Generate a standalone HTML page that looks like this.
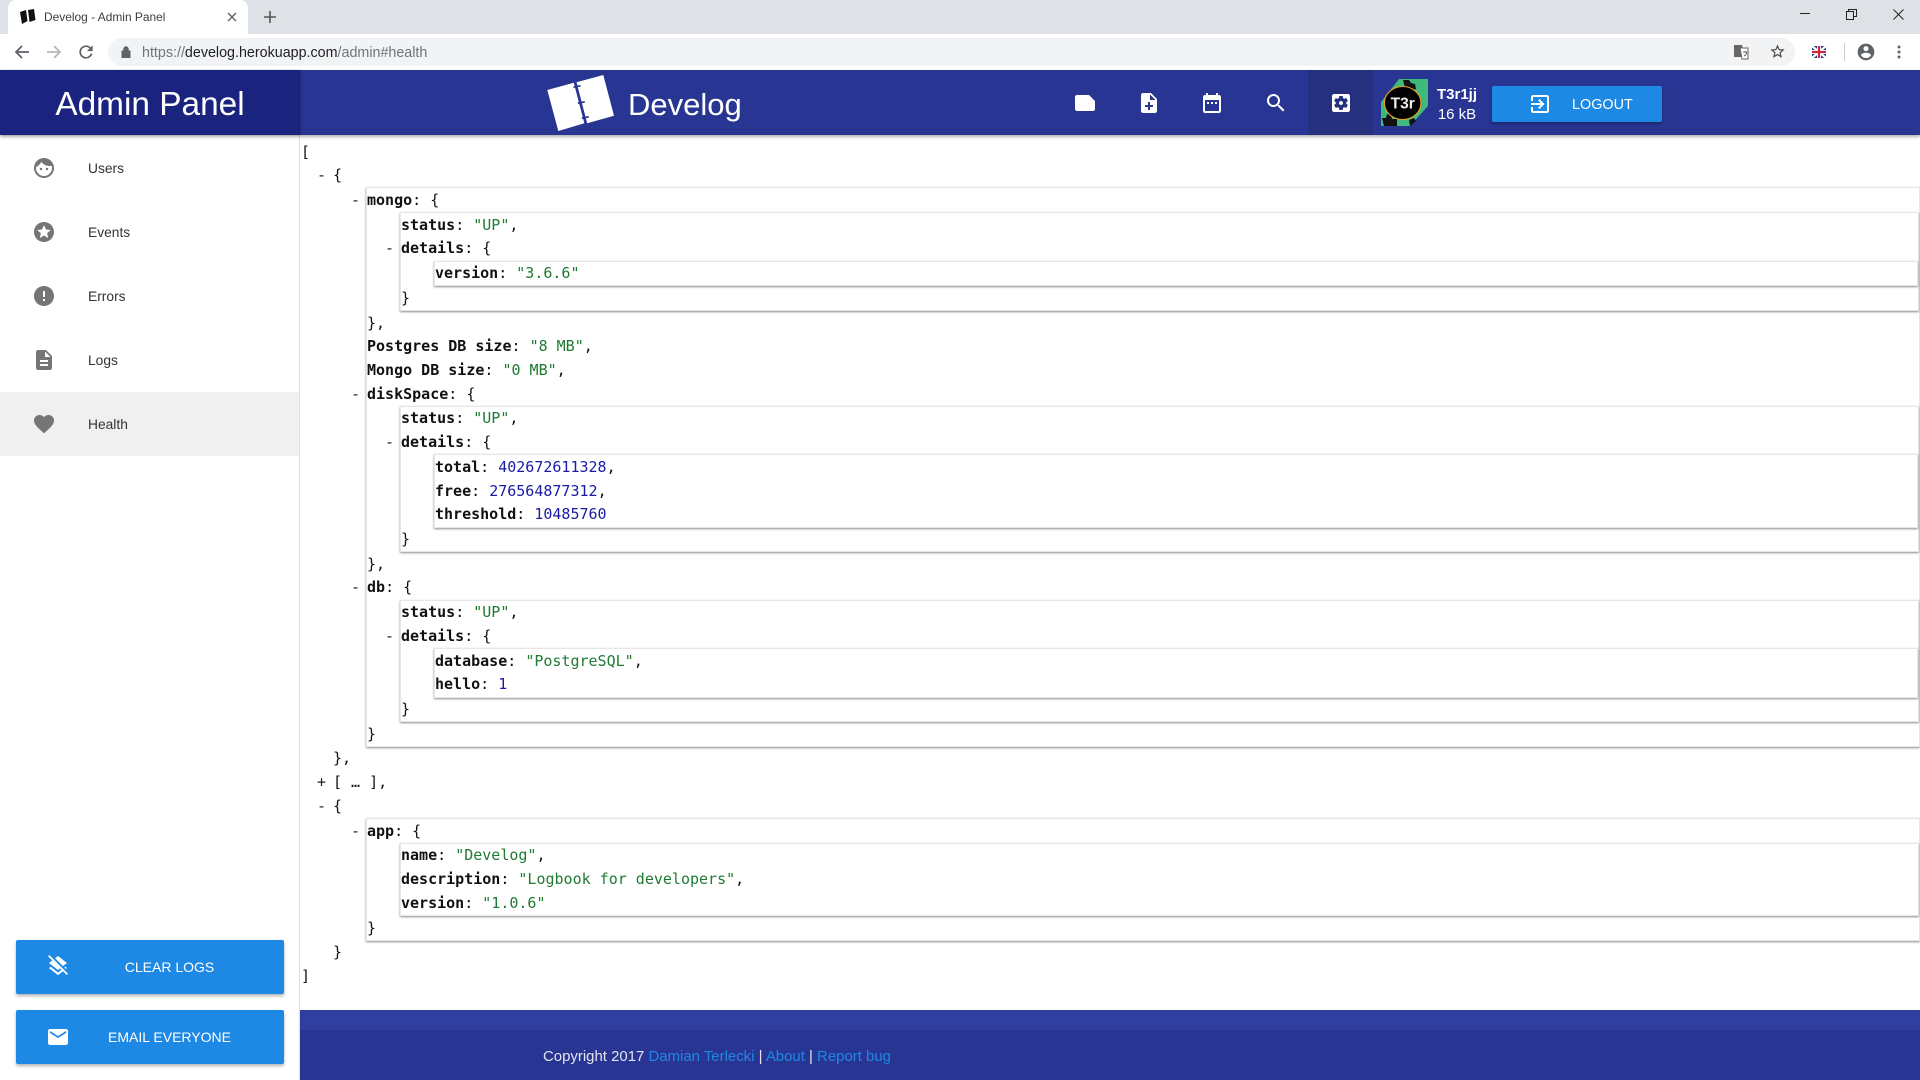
<!DOCTYPE html>
<html><head><meta charset="utf-8"><title>Develog - Admin Panel</title>
<style>
*{box-sizing:border-box}
html,body{margin:0;padding:0;width:1920px;height:1080px;overflow:hidden;background:#fff;font-family:"Liberation Sans",sans-serif}
.a{position:absolute}
svg{display:block}
.tabs{left:0;top:0;width:1920px;height:34px;background:#dee1e6}
.tab{left:8px;top:0;width:240px;height:34px;background:#fff;border-radius:8px 8px 0 0}
.tb{left:0;top:34px;width:1920px;height:36px;background:#fff}
.omni{left:108px;top:38px;width:1687px;height:28px;background:#f1f3f4;border-radius:14px}
.hdr{left:0;top:70px;width:1920px;height:65px;background:#283593;box-shadow:0 2px 3px rgba(0,0,0,.3);z-index:3}
.side{left:0;top:135px;width:300px;height:945px;background:#fff;border-right:1px solid #e0e0e0;z-index:2}
.it{position:absolute;left:0;width:299px;height:64px}
.it svg{position:absolute;left:32px;top:20px}
.it span{position:absolute;left:88px;top:1px;line-height:64px;font-size:13.8px;color:#333}
.btn{position:absolute;background:#1e88e5;border-radius:2px;box-shadow:0 2px 3px rgba(0,0,0,.3);color:#fff}
.btn span{position:absolute;text-align:center;left:0;width:100%}
.json{position:absolute;left:301px;top:140px;width:1619px;height:869px;overflow:hidden;font:15px/23.72px "DejaVu Sans Mono","Liberation Mono",monospace;color:#111;z-index:1}
.l{height:23.72px;position:relative;white-space:pre;top:.5px}
.n{margin-left:32px}
.b{margin-left:33px;border:1px solid #e6e6e6;box-shadow:0 1px 2px rgba(0,0,0,.45);position:relative;background:#fff}
.d{position:absolute;left:-16px;color:#222}
b{font-weight:bold;color:#111}
i{font-style:normal;color:#1f7a32}
u{text-decoration:none;color:#1a1aa6}
.ft{left:300px;top:1010px;width:1620px;height:70px;background:#283593;z-index:2}
.ft div{position:absolute;left:0;top:0;width:100%;height:20px;background:#303f9f}
.ft p{position:absolute;left:243px;top:38px;margin:0;font-size:14.95px;line-height:18px;color:#e3e5f0;white-space:nowrap}
.ft a{color:#1e88e5;text-decoration:none}
</style></head><body>
<div class="a tabs"></div>
<div class="a tab"></div>
<svg class="a" style="left:19px;top:9px" width="17" height="16" viewBox="0 0 17 16"><path d="M1 3l6-2 1.5 11-5.5 3zM9 1l6-1 1.5 11-6 2z" fill="#111"/></svg>
<div class="a" style="left:44px;top:9px;font-size:11.95px;line-height:16px;color:#3c4043">Develog - Admin Panel</div>
<svg class="a" style="left:227px;top:12px" width="10" height="10" viewBox="0 0 10 10"><path d="M1 1l8 8M9 1L1 9" stroke="#5f6368" stroke-width="1.4"/></svg>
<svg class="a" style="left:264px;top:11px" width="12" height="12" viewBox="0 0 12 12"><path d="M6 0v12M0 6h12" stroke="#555" stroke-width="1.6"/></svg>
<svg class="a" style="left:1800px;top:13px" width="11" height="2"><rect width="10" height="1" fill="#222"/></svg>
<svg class="a" style="left:1846px;top:9px" width="11" height="11" viewBox="0 0 11 11"><path d="M.5 2.5h7v8h-7zM2.5 2.5v-2h8v7h-3" fill="none" stroke="#222"/></svg>
<svg class="a" style="left:1893px;top:9px" width="11" height="11" viewBox="0 0 11 11"><path d="M.5.5l10 10M10.500.5l-10 10" stroke="#222"/></svg>
<div class="a tb"></div>
<svg class="a" style="left:14px;top:44px" width="16" height="16" viewBox="0 0 16 16"><path d="M15 8H2M8 2L2 8l6 6" fill="none" stroke="#5f6368" stroke-width="1.8"/></svg>
<svg class="a" style="left:46px;top:44px" width="16" height="16" viewBox="0 0 16 16"><path d="M1 8h13M8 2l6 6-6 6" fill="none" stroke="#b4b7bb" stroke-width="1.8"/></svg>
<svg class="a" style="left:76px;top:42px" width="20" height="20" viewBox="0 0 24 24"><path d="M17.65 6.35A7.96 7.96 0 0 0 12 4a8 8 0 1 0 7.73 10h-2.08A6 6 0 1 1 12 6c1.66 0 3.14.69 4.22 1.78L13 11h7V4l-2.35 2.35z" fill="#5f6368"/></svg>
<div class="a omni"></div>
<svg class="a" style="left:121px;top:46px" width="10" height="12" viewBox="0 0 10 12"><path d="M1 5h8v7H1zM2.8 5V3a2.2 2.2 0 0 1 4.4 0v2" fill="#5f6368" stroke="#5f6368"/></svg>
<div class="a" style="left:142px;top:43.500px;font-size:14.300px;line-height:18px;color:#70757a;white-space:nowrap">https://<span style="color:#202124">develog.herokuapp.com</span>/admin#health</div>
<svg class="a" style="left:1733px;top:45px" width="16" height="15" viewBox="0 0 16 15"><path d="M1 0h8l3 12H1z" fill="#666"/><path d="M7 3h8v11H9z" fill="#fff" stroke="#666"/><path d="M10 7h4M12 6v1M11 11c2-1 2.500-2 3-4" stroke="#666" fill="none"/></svg>
<svg class="a" style="left:1769px;top:43px" width="17" height="17" viewBox="0 0 24 24"><path d="M22 9.24l-7.19-.62L12 2 9.19 8.63 2 9.24l5.46 4.73L5.82 21 12 17.27 18.18 21l-1.63-7.03L22 9.24zM12 15.4l-3.76 2.27 1-4.28-3.32-2.88 4.38-.38L12 6.1l1.71 4.04 4.38.38-3.32 2.88 1 4.28L12 15.4z" fill="#444"/></svg>
<svg class="a" style="left:1812px;top:46px" width="14" height="12" viewBox="0 0 14 12"><rect width="14" height="12" fill="#2a3f8f" rx="1"/><path d="M0 0l14 12M14 0L0 12" stroke="#fff" stroke-width="2.2"/><path d="M7 0v12M0 6h14" stroke="#fff" stroke-width="4"/><path d="M7 0v12M0 6h14" stroke="#c8283c" stroke-width="2.2"/></svg>
<div class="a" style="left:1844px;top:43px;width:1px;height:18px;background:#ccc"></div>
<svg class="a" style="left:1856px;top:42px" width="20" height="20" viewBox="0 0 24 24"><path d="M12 2C6.48 2 2 6.48 2 12s4.48 10 10 10 10-4.48 10-10S17.52 2 12 2zm0 3c1.66 0 3 1.34 3 3s-1.34 3-3 3-3-1.34-3-3 1.34-3 3-3zm0 14.2a7.2 7.2 0 0 1-6-3.22c.03-1.99 4-3.08 6-3.08 1.99 0 5.97 1.09 6 3.08a7.2 7.2 0 0 1-6 3.22z" fill="#5f6368"/></svg>
<svg class="a" style="left:1897px;top:45px" width="4" height="14" viewBox="0 0 4 14"><circle cx="2" cy="2" r="1.5" fill="#5f6368"/><circle cx="2" cy="7" r="1.5" fill="#5f6368"/><circle cx="2" cy="12" r="1.5" fill="#5f6368"/></svg>

<div class="a hdr">
<div class="a" style="left:0;top:0;width:300px;height:65px;background:#1a237e;box-shadow:1px 0 2px rgba(0,0,0,.2)"></div>
<div class="a" style="left:0;top:2px;width:300px;text-align:center;line-height:66px;font-size:33.400px;color:#fff">Admin Panel</div>
<svg class="a" style="left:540px;top:0" width="84" height="65" viewBox="540 70 84 65"><path d="M547.300 90l26.500-7.200 10.500 40.500L558.300 131z" fill="#fff"/><path d="M576.500 82.200l26.800-7.200 10.700 40.700-26.800 7.600z" fill="#fff"/><path d="M573.500 87.300l3.500-.9 3.500-.6M577.800 103.200l7-1.400M581.800 118.200l7-1.400" stroke="#283593" stroke-width="1.600"/></svg>
<div class="a" style="left:628px;top:0;line-height:70px;font-size:31px;color:#fff">Develog</div>
<div class="a" style="left:1308px;top:0;width:65px;height:65px;background:#25307f"></div>
<svg class="a" style="left:1073px;top:21px" width="24" height="24" viewBox="0 0 24 24"><path d="M22 10l-6-6H4c-1.1 0-2 .9-2 2v12.010c0 1.100.9 1.990 2 1.990l16-.01c1.100 0 2-.89 2-1.990v-8z" fill="#fff"/></svg>
<svg class="a" style="left:1137px;top:21px" width="24" height="24" viewBox="0 0 24 24"><path d="M14 2H6c-1.100 0-1.990.9-1.990 2L4 20c0 1.100.89 2 1.990 2H18c1.100 0 2-.9 2-2V8l-6-6zm2 14h-3v3h-2v-3H8v-2h3v-3h2v3h3v2zm-3-7V3.500L18.500 9H13z" fill="#fff"/></svg>
<svg class="a" style="left:1200px;top:21px" width="24" height="24" viewBox="0 0 24 24"><path d="M9 11H7v2h2v-2zm4 0h-2v2h2v-2zm4 0h-2v2h2v-2zm2-7h-1V2h-2v2H8V2H6v2H5c-1.110 0-1.990.9-1.990 2L3 20c0 1.100.89 2 2 2h14c1.100 0 2-.9 2-2V6c0-1.100-.9-2-2-2zm0 16H5V9h14v11z" fill="#fff"/></svg>
<svg class="a" style="left:1264px;top:21px" width="24" height="24" viewBox="0 0 24 24"><path d="M15.500 14h-.79l-.28-.27C15.410 12.590 16 11.110 16 9.500 16 5.910 13.090 3 9.500 3S3 5.910 3 9.500 5.910 16 9.500 16c1.610 0 3.090-.59 4.230-1.570l.27.28v.79l5 4.990L20.490 19l-4.990-5zm-6 0C7.010 14 5 11.990 5 9.500S7.010 5 9.500 5 14 7.010 14 9.500 11.990 14 9.500 14z" fill="#fff"/></svg>
<svg class="a" style="left:1329px;top:21px" width="24" height="24" viewBox="0 0 24 24"><path d="M12 10c-1.100 0-2 .9-2 2s.9 2 2 2 2-.9 2-2-.9-2-2-2zm7-7H5c-1.110 0-2 .9-2 2v14c0 1.100.89 2 2 2h14c1.110 0 2-.9 2-2V5c0-1.100-.89-2-2-2zm-1.750 9c0 .23-.02.46-.05.68l1.480 1.160c.13.11.17.3.08.45l-1.400 2.420c-.09.15-.27.21-.43.15l-1.740-.7c-.36.28-.76.51-1.180.69l-.26 1.850c-.03.17-.18.3-.35.3h-2.800c-.17 0-.32-.13-.35-.29l-.26-1.850c-.43-.18-.82-.41-1.180-.69l-1.740.7c-.16.06-.34 0-.43-.15l-1.400-2.420c-.09-.15-.05-.34.08-.45l1.480-1.160c-.03-.23-.05-.46-.05-.69 0-.23.02-.46.05-.68l-1.480-1.160c-.13-.11-.17-.3-.08-.45l1.400-2.420c.09-.15.27-.21.43-.15l1.740.7c.36-.28.76-.51 1.180-.69l.26-1.850c.03-.17.18-.3.35-.3h2.800c.17 0 .32.13.35.29l.26 1.850c.43.18.82.41 1.180.69l1.740-.7c.16-.06.34 0 .43.15l1.400 2.420c.09.15.05.34-.08.45l-1.480 1.160c.03.23.05.46.05.69z" fill="#fff"/></svg>
<svg class="a" style="left:1379px;top:8px" width="50" height="50" viewBox="0 0 50 50"><path d="M20 1L49 1 49 28 31 48 2 48 2 24z" fill="#3dba7c"/><path d="M24 2h6l2 3 4 1 1 5-6 2-5-3zM3 40h4l1-4 4 1 1 4h5v7H5zM30 42l5-2 2 3-6 5z" fill="#111"/><ellipse cx="23.700" cy="25" rx="18.300" ry="16.500" fill="#000" stroke="#e8a020" stroke-width="1.100"/><text x="23.700" y="30.500" text-anchor="middle" font-family="Liberation Sans,sans-serif" font-size="15.500" font-weight="bold" fill="#eee">T3r</text></svg>
<div class="a" style="left:1417px;top:14.500px;width:80px;text-align:center;font-size:15px;line-height:20px;font-weight:bold;color:#fff">T3r1jj</div>
<div class="a" style="left:1417px;top:34.500px;width:80px;text-align:center;font-size:15px;line-height:20px;color:#fff">16 kB</div>
<div class="btn" style="left:1492px;top:16px;width:170px;height:36px">
<svg class="a" style="left:36px;top:6px" width="24" height="24" viewBox="0 0 24 24"><path d="M10.090 15.590L11.500 17l5-5-5-5-1.410 1.410L12.670 11H3v2h9.670l-2.580 2.590zM19 3H5c-1.110 0-2 .9-2 2v4h2V5h14v14H5v-4H3v4c0 1.100.89 2 2 2h14c1.100 0 2-.9 2-2V5c0-1.100-.9-2-2-2z" fill="#fff"/></svg>
<span style="left:80px;width:60px;top:1px;line-height:37px;font-size:14.400px;text-align:center">LOGOUT</span></div>
</div>

<div class="a side">
<div class="it" style="top:1px"><svg width="24" height="24" viewBox="0 0 24 24"><path d="M9 11.750c-.69 0-1.250.56-1.250 1.250s.56 1.250 1.250 1.250 1.250-.56 1.250-1.250-.56-1.250-1.250-1.250zm6 0c-.69 0-1.250.56-1.250 1.250s.56 1.250 1.250 1.250 1.250-.56 1.250-1.250-.56-1.250-1.250-1.250zM12 2C6.480 2 2 6.480 2 12s4.480 10 10 10 10-4.480 10-10S17.520 2 12 2zm0 18c-4.410 0-8-3.590-8-8 0-.29.02-.58.05-.86 2.360-1.050 4.230-2.980 5.210-5.370C11.070 8.330 14.050 10 17.420 10c.78 0 1.530-.09 2.250-.26.21.71.33 1.470.33 2.260 0 4.410-3.590 8-8 8z" fill="#757575"/></svg><span>Users</span></div>
<div class="it" style="top:65px"><svg width="24" height="24" viewBox="0 0 24 24"><path d="M11.990 2C6.470 2 2 6.480 2 12s4.470 10 9.990 10C17.520 22 22 17.520 22 12S17.520 2 11.990 2zm4.240 16L12 15.450 7.770 18l1.120-4.810-3.730-3.230 4.920-.42L12 5l1.920 4.530 4.920.42-3.730 3.230L16.230 18z" fill="#757575"/></svg><span>Events</span></div>
<div class="it" style="top:129px"><svg width="24" height="24" viewBox="0 0 24 24"><path d="M12 2C6.480 2 2 6.480 2 12s4.480 10 10 10 10-4.480 10-10S17.520 2 12 2zm1 15h-2v-2h2v2zm0-4h-2V7h2v6z" fill="#757575"/></svg><span>Errors</span></div>
<div class="it" style="top:193px"><svg width="24" height="24" viewBox="0 0 24 24"><path d="M14 2H6c-1.100 0-1.990.9-1.990 2L4 20c0 1.100.89 2 1.990 2H18c1.100 0 2-.9 2-2V8l-6-6zm2 16H8v-2h8v2zm0-4H8v-2h8v2zm-3-5V3.500L18.500 9H13z" fill="#757575"/></svg><span>Logs</span></div>
<div class="it" style="top:257px;background:#f0f0f0"><svg width="24" height="24" viewBox="0 0 24 24"><path d="M12 21.350l-1.450-1.320C5.400 15.360 2 12.280 2 8.500 2 5.420 4.420 3 7.500 3c1.740 0 3.410.81 4.500 2.090C13.090 3.810 14.760 3 16.500 3 19.580 3 22 5.420 22 8.500c0 3.780-3.400 6.860-8.550 11.540L12 21.350z" fill="#757575"/></svg><span>Health</span></div>
<div class="btn" style="left:16px;top:805px;width:268px;height:54px">
<svg class="a" style="left:30px;top:14px" width="24" height="24" viewBox="0 0 24 24"><path d="M19.810 14.990l1.190-.92-1.430-1.430-1.190.92 1.430 1.430zm-.45-4.720L21 9l-9-7-2.910 2.270 7.870 7.880 2.400-1.880zM3.270 1L2 2.270l4.220 4.220L3 9l1.630 1.270L12 16l2.100-1.630 1.430 1.430L12 18.540l-7.370-5.730L3 14.070l9 7 4.950-3.850L20.730 21 22 19.730 3.270 1z" fill="#fff"/></svg>
<span style="left:57px;width:193px;top:0;line-height:54px;font-size:14px">CLEAR LOGS</span></div>
<div class="btn" style="left:16px;top:875px;width:268px;height:54px">
<svg class="a" style="left:30px;top:15px" width="24" height="24" viewBox="0 0 24 24"><path d="M20 4H4c-1.100 0-1.990.9-1.990 2L2 18c0 1.100.9 2 2 2h16c1.100 0 2-.9 2-2V6c0-1.100-.9-2-2-2zm0 4l-8 5-8-5V6l8 5 8-5v2z" fill="#fff"/></svg>
<span style="left:57px;width:193px;top:0;line-height:54px;font-size:14px">EMAIL EVERYONE</span></div>
</div>

<div class="json">
<div class="l">[</div>
<div class="n">
<div class="l"><span class="d">-</span>{</div>
<div class="b">
<div class="l"><span class="d">-</span><b>mongo</b>: {</div>
<div class="b">
<div class="l"><b>status</b>: <i>"UP"</i>,</div>
<div class="l"><span class="d">-</span><b>details</b>: {</div>
<div class="b"><div class="l"><b>version</b>: <i>"3.6.6"</i></div></div>
<div class="l">}</div>
</div>
<div class="l">},</div>
<div class="l"><b>Postgres DB size</b>: <i>"8 MB"</i>,</div>
<div class="l"><b>Mongo DB size</b>: <i>"0 MB"</i>,</div>
<div class="l"><span class="d">-</span><b>diskSpace</b>: {</div>
<div class="b">
<div class="l"><b>status</b>: <i>"UP"</i>,</div>
<div class="l"><span class="d">-</span><b>details</b>: {</div>
<div class="b">
<div class="l"><b>total</b>: <u>402672611328</u>,</div>
<div class="l"><b>free</b>: <u>276564877312</u>,</div>
<div class="l"><b>threshold</b>: <u>10485760</u></div>
</div>
<div class="l">}</div>
</div>
<div class="l">},</div>
<div class="l"><span class="d">-</span><b>db</b>: {</div>
<div class="b">
<div class="l"><b>status</b>: <i>"UP"</i>,</div>
<div class="l"><span class="d">-</span><b>details</b>: {</div>
<div class="b">
<div class="l"><b>database</b>: <i>"PostgreSQL"</i>,</div>
<div class="l"><b>hello</b>: <u>1</u></div>
</div>
<div class="l">}</div>
</div>
<div class="l">}</div>
</div>
<div class="l">},</div>
<div class="l"><span class="d">+</span>[ … ],</div>
<div class="l"><span class="d">-</span>{</div>
<div class="b">
<div class="l"><span class="d">-</span><b>app</b>: {</div>
<div class="b">
<div class="l"><b>name</b>: <i>"Develog"</i>,</div>
<div class="l"><b>description</b>: <i>"Logbook for developers"</i>,</div>
<div class="l"><b>version</b>: <i>"1.0.6"</i></div>
</div>
<div class="l">}</div>
</div>
<div class="l">}</div>
</div>
<div class="l">]</div>
</div>

<div class="a ft"><div></div><p>Copyright 2017 <a>Damian Terlecki</a> | <a>About</a> | <a>Report bug</a></p></div>
</body></html>
